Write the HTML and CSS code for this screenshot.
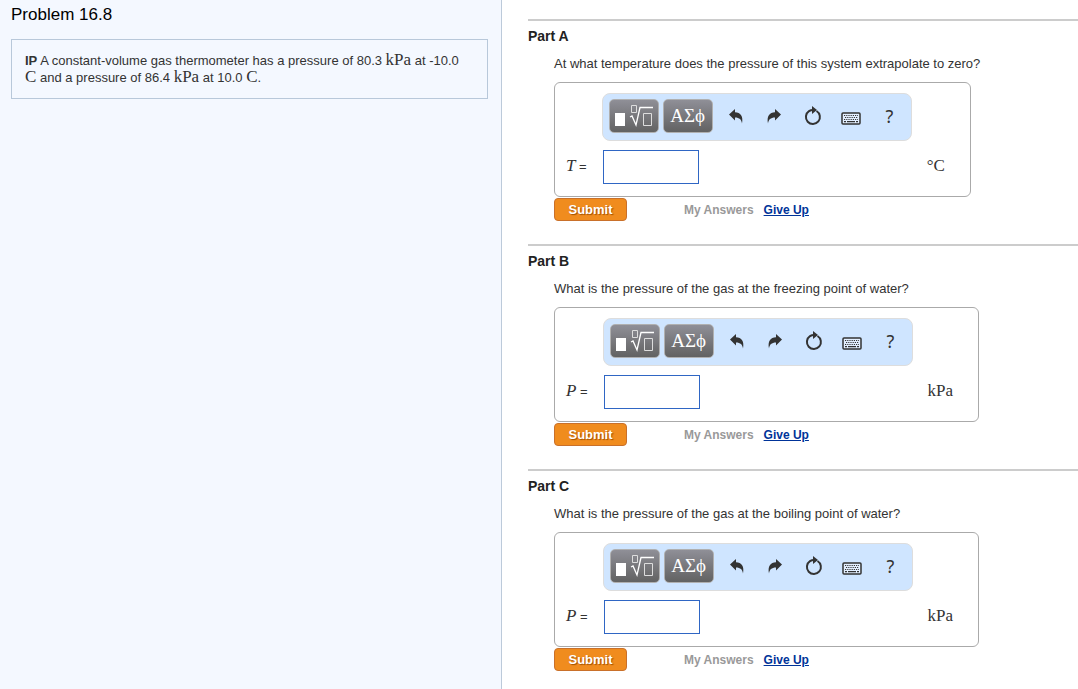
FILE: index.html
```html
<!DOCTYPE html>
<html lang="en">
<head>
    <meta charset="UTF-8">
    <meta name="viewport" content="width=device-width, initial-scale=1.0">
    <title>Problem 16.8</title>
    <link rel="stylesheet" href="styles.css">
</head>
<body>
    <!-- toolbar icons, shared by every part -->
    <svg class="sprite" aria-hidden="true">
        <symbol id="templates" viewBox="0 0 38 24">
            <path d="M0 9h10v13H0z" fill="#fff"/>
            <path d="M16.500 1.500h5v7h-5zM28.500 9.500h8v12h-8z" fill="none" stroke="#ddd"/>
            <path d="M15 13l2-1 4 9 4-17.500h13" fill="none" stroke="#fff" stroke-width="1.300"/>
        </symbol>
        <symbol id="undo" viewBox="0 0 16 16">
            <path d="M1 6.500L7 1v3.200c5.500 .2 8.500 4 7 11.300C13.400 11.500 11.500 9.600 7 9.500V12.500z" fill="#333"/>
        </symbol>
        <symbol id="reset" viewBox="0 0 18 20">
            <path d="M12.500 5A7 7 0 1 1 5 5.200Q6.800 4 9 4" fill="none" stroke="#333" stroke-width="2"/>
            <path d="M8 0l5 4-5 4z" fill="#333"/>
        </symbol>
        <symbol id="keyboard" viewBox="0 0 20 13">
            <rect x="1" y="1" width="18" height="11" rx="1" fill="#e3efff" stroke="#333" stroke-width="1.500"/>
            <path d="M3 3.500h14M4 5.500h13M3 7.500h14" stroke="#333" stroke-width="1.200" stroke-dasharray="1.200 1"/>
            <path d="M3 9.700h2M6 9.700h8M15 9.700h2" stroke="#333" stroke-width="1.200"/>
        </symbol>
    </svg>

    <div class="page">
        <div class="problem">
            <h1>Problem 16.8</h1>
            <div class="intro">
                <b>IP</b> A constant-volume gas thermometer has a pressure of 80.3 <span class="math">kPa</span> at -10.0 <span class="math">C</span> and a pressure of 86.4 <span class="math">kPa</span> at 10.0 <span class="math">C</span>.
            </div>
        </div>

        <div class="parts">
            <form class="part">
                <h2>Part A</h2>
                <div class="part_body">
                    <p>At what temperature does the pressure of this system extrapolate to zero?</p>
                    <div class="answer_box">
                        <div class="toolbar">
                            <button type="button" class="dark" aria-label="Templates"><svg width="38" height="24"><use href="#templates"/></svg></button>
                            <button type="button" class="dark greek">ΑΣϕ</button>
                            <button type="button" class="tool" aria-label="Undo"><svg width="16" height="16"><use href="#undo"/></svg></button>
                            <button type="button" class="tool" aria-label="Redo"><svg class="flip" width="16" height="16"><use href="#undo"/></svg></button>
                            <button type="button" class="tool" aria-label="Reset"><svg width="18" height="20"><use href="#reset"/></svg></button>
                            <button type="button" class="tool low" aria-label="Keyboard"><svg width="20" height="13"><use href="#keyboard"/></svg></button>
                            <button type="button" class="tool help">?</button>
                        </div>
                        <label for="answer_a"><i class="math">T</i> =</label>
                        <input type="text" id="answer_a">
                        <span class="math unit">°C</span>
                    </div>
                    <div class="actions">
                        <button type="submit" class="submit">Submit</button>
                        <span class="my_answers">My Answers</span>
                        <a href="#">Give Up</a>
                    </div>
                </div>
            </form>

            <form class="part">
                <h2>Part B</h2>
                <div class="part_body">
                    <p>What is the pressure of the gas at the freezing point of water?</p>
                    <div class="answer_box">
                        <div class="toolbar">
                            <button type="button" class="dark" aria-label="Templates"><svg width="38" height="24"><use href="#templates"/></svg></button>
                            <button type="button" class="dark greek">ΑΣϕ</button>
                            <button type="button" class="tool" aria-label="Undo"><svg width="16" height="16"><use href="#undo"/></svg></button>
                            <button type="button" class="tool" aria-label="Redo"><svg class="flip" width="16" height="16"><use href="#undo"/></svg></button>
                            <button type="button" class="tool" aria-label="Reset"><svg width="18" height="20"><use href="#reset"/></svg></button>
                            <button type="button" class="tool low" aria-label="Keyboard"><svg width="20" height="13"><use href="#keyboard"/></svg></button>
                            <button type="button" class="tool help">?</button>
                        </div>
                        <label for="answer_b"><i class="math">P</i> =</label>
                        <input type="text" id="answer_b">
                        <span class="math unit">kPa</span>
                    </div>
                    <div class="actions">
                        <button type="submit" class="submit">Submit</button>
                        <span class="my_answers">My Answers</span>
                        <a href="#">Give Up</a>
                    </div>
                </div>
            </form>

            <form class="part">
                <h2>Part C</h2>
                <div class="part_body">
                    <p>What is the pressure of the gas at the boiling point of water?</p>
                    <div class="answer_box">
                        <div class="toolbar">
                            <button type="button" class="dark" aria-label="Templates"><svg width="38" height="24"><use href="#templates"/></svg></button>
                            <button type="button" class="dark greek">ΑΣϕ</button>
                            <button type="button" class="tool" aria-label="Undo"><svg width="16" height="16"><use href="#undo"/></svg></button>
                            <button type="button" class="tool" aria-label="Redo"><svg class="flip" width="16" height="16"><use href="#undo"/></svg></button>
                            <button type="button" class="tool" aria-label="Reset"><svg width="18" height="20"><use href="#reset"/></svg></button>
                            <button type="button" class="tool low" aria-label="Keyboard"><svg width="20" height="13"><use href="#keyboard"/></svg></button>
                            <button type="button" class="tool help">?</button>
                        </div>
                        <label for="answer_c"><i class="math">P</i> =</label>
                        <input type="text" id="answer_c">
                        <span class="math unit">kPa</span>
                    </div>
                    <div class="actions">
                        <button type="submit" class="submit">Submit</button>
                        <span class="my_answers">My Answers</span>
                        <a href="#">Give Up</a>
                    </div>
                </div>
            </form>
        </div>
    </div>
</body>
</html>
```
FILE: styles.css
```css
*{
    margin: 0;
    padding: 0;
    box-sizing: border-box;
}
body{
    font-family: "Liberation Sans", Arial, sans-serif;
    font-size: 13px;
    line-height: 16px;
    color: #333;
    background: #fff;
}
.sprite{
    display: none;
}
.page{
    display: grid;
    grid-template-columns: 502px 1fr;
    min-height: 100vh;
}

/* left side */
.problem{
    padding: 5px 13px 20px 11px;
    background: #f4f8ff;
    border-right: 1px solid #bccada;
}
h1{
    font-size: 17px;
    font-weight: normal;
    line-height: 20px;
    color: #000;
}
.intro{
    margin-top: 14px;
    padding: 12px 20px 12px 13px;
    line-height: 17px;
    border: 1px solid #b8c8da;
}
.math{
    font-family: "Liberation Serif", "Times New Roman", serif;
    font-size: 17px;
    line-height: 16px;
}
.intro .math{
    line-height: 1px;
}

/* right side */
.parts{
    padding: 19px 0 0 26px;
}
.part{
    border-top: 2px solid #ccc;
    padding: 7px 0 23px;
}
h2{
    font-size: 14px;
    line-height: 16px;
    color: #222;
}
.part_body{
    padding: 12px 0 0 26px;
}
.answer_box{
    display: grid;
    grid-template-columns: auto 310px auto;
    width: max-content;
    margin-top: 10px;
    padding: 10px 25px 12px 11px;
    border: 1px solid #aaa;
    border-radius: 6px;
    row-gap: 9px;
    align-items: center;
}
.toolbar{
    grid-column: 2;
    display: flex;
    align-items: center;
    height: 48px;
    padding: 0 2px 2px 6px;
    background: #cfe5ff;
    border: 1px solid #ddd;
    border-radius: 8px;
}
button{
    font-family: inherit;
    cursor: pointer;
}
.toolbar button{
    display: flex;
    align-items: center;
    justify-content: center;
}
.dark{
    width: 50px;
    height: 34px;
    margin-right: 4px;
    color: #fff;
    background: linear-gradient(#8f8f97, #626262);
    border: 1px solid #b0b0b0;
    border-radius: 5px;
}
.greek{
    font-family: "Liberation Serif", serif;
    font-size: 19px;
}
.tool{
    flex: 1;
    height: 34px;
    color: #333;
    background: none;
    border: 0;
}
.low{
    padding-top: 4px;
}
.flip{
    transform: scaleX(-1);
}
.help{
    font-family: "Noto Sans", sans-serif;
    font-size: 18px;
}
.answer_box label{
    grid-column: 1;
    padding: 0 15px 2px 0;
}
.answer_box input{
    width: 96px;
    height: 34px;
    margin-left: 1px;
    padding: 0 6px;
    font-size: 16px;
    border: 1px solid #2f66c4;
    background: #fff;
}
.unit{
    padding: 0 0 2px 15px;
}
.actions{
    display: flex;
    align-items: center;
    margin-top: 1px;
    font-size: 12px;
    font-weight: bold;
}
.submit{
    width: 73px;
    height: 23px;
    margin-right: 57px;
    font-size: 13px;
    font-weight: bold;
    color: #fff;
    text-shadow: 1px 1px 1px #a05000;
    background: #f08c1e;
    border: 1px solid #c9702a;
    border-radius: 4px;
}
.my_answers{
    margin-right: 10px;
    color: #999;
}
.actions a{
    color: #003399;
}
```
